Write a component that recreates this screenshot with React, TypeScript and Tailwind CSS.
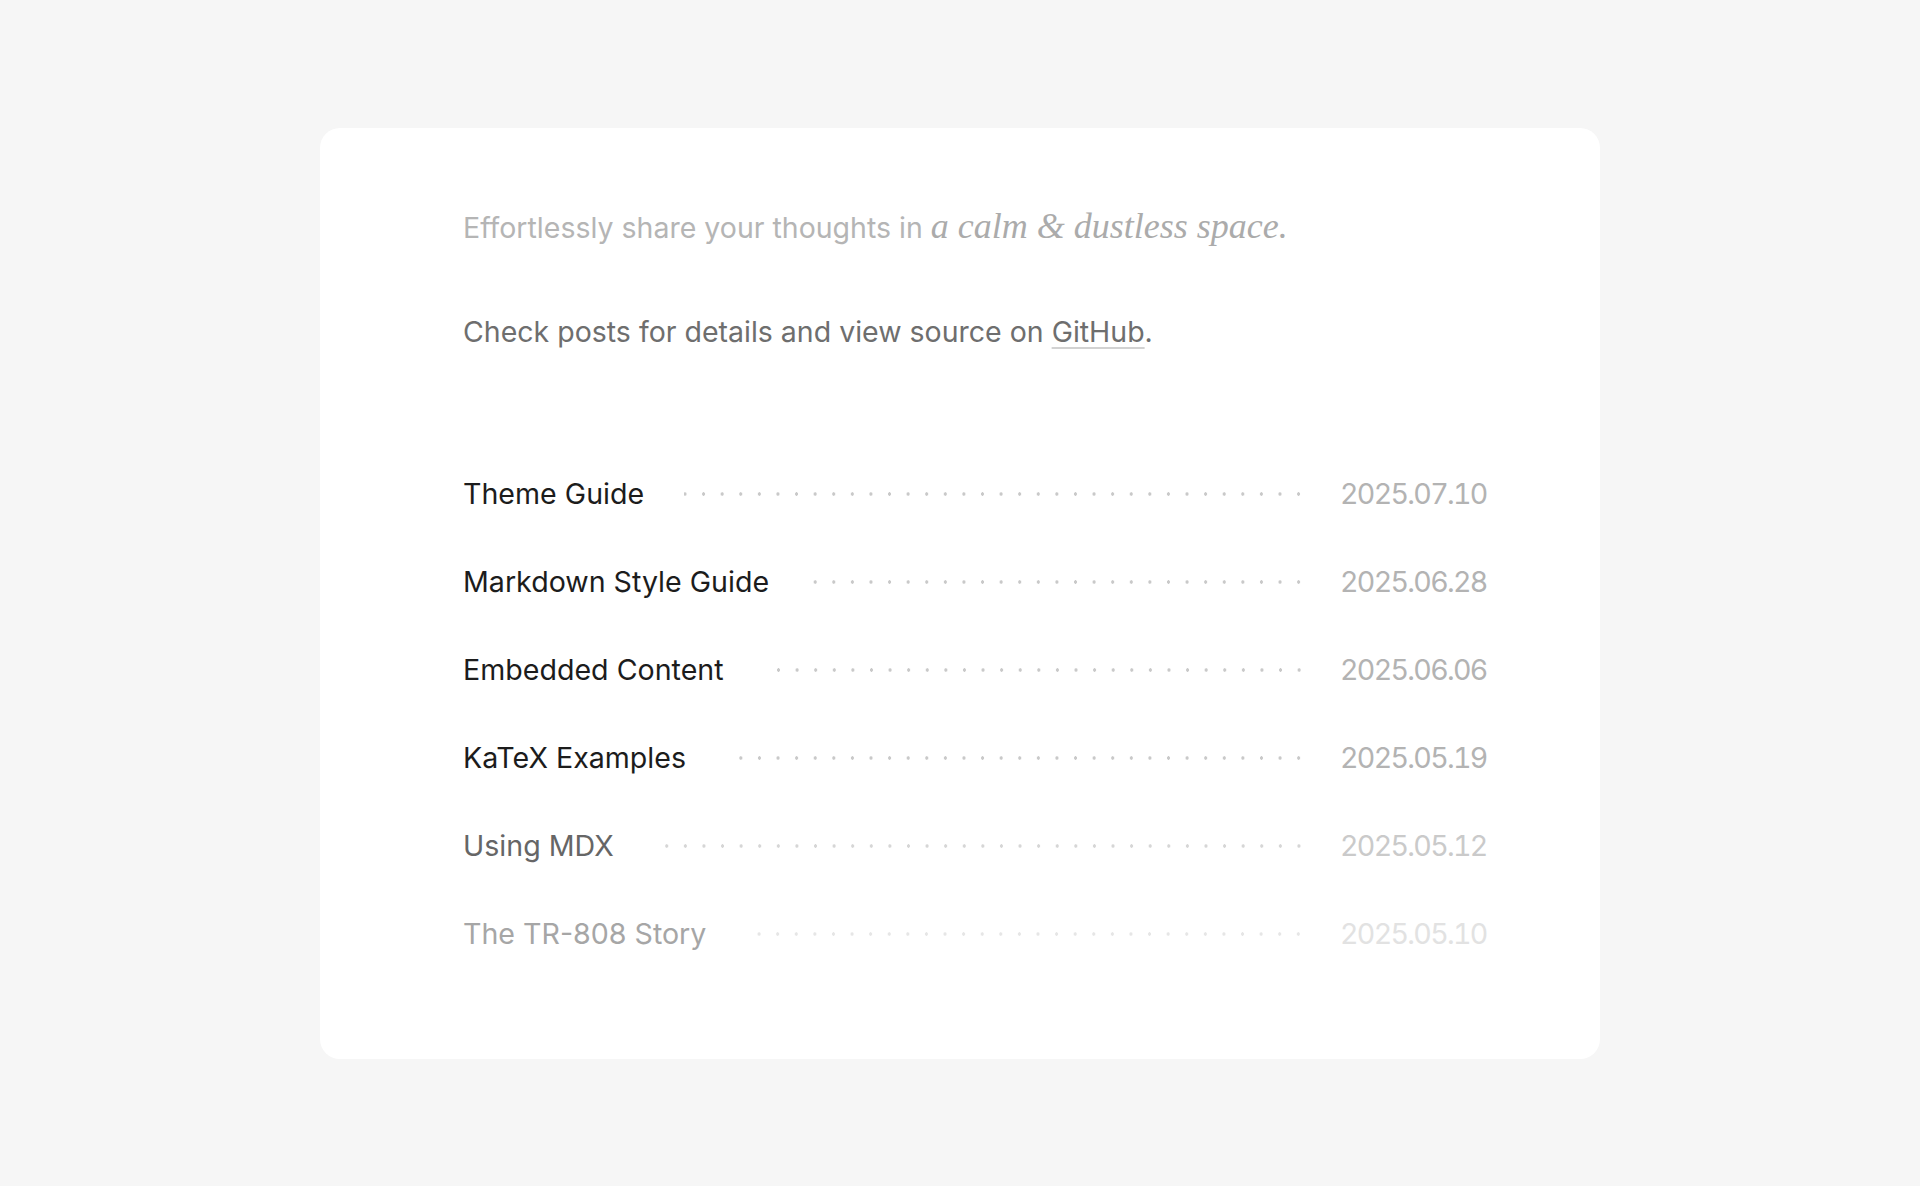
import React from "react";

const posts = [
  { title: "Theme Guide", date: "2025.07.10", t: "text-[#1c1c1c]", d: "text-[#b3b3b3]", dot: "bg-[radial-gradient(circle,#c9c9c9_1.5px,transparent_1.9px)]" },
  { title: "Markdown Style Guide", date: "2025.06.28", t: "text-[#1c1c1c]", d: "text-[#b3b3b3]", dot: "bg-[radial-gradient(circle,#c9c9c9_1.5px,transparent_1.9px)]" },
  { title: "Embedded Content", date: "2025.06.06", t: "text-[#1c1c1c]", d: "text-[#b3b3b3]", dot: "bg-[radial-gradient(circle,#c9c9c9_1.5px,transparent_1.9px)]" },
  { title: "KaTeX Examples", date: "2025.05.19", t: "text-[#1c1c1c]", d: "text-[#b3b3b3]", dot: "bg-[radial-gradient(circle,#c9c9c9_1.5px,transparent_1.9px)]" },
  { title: "Using MDX", date: "2025.05.12", t: "text-[#666666]", d: "text-[#cacaca]", dot: "bg-[radial-gradient(circle,#d6d6d6_1.5px,transparent_1.9px)]" },
  { title: "The TR-808 Story", date: "2025.05.10", t: "text-[#a6a6a6]", d: "text-[#e2e2e2]", dot: "bg-[radial-gradient(circle,#e6e6e6_1.5px,transparent_1.9px)]" },
];

export default function App() {
  return (
    <div className="min-h-[1186px] w-full bg-[#f6f6f6] pt-[128px] font-['Inter','Liberation_Sans',sans-serif]">
      <div className="mx-auto flex w-[1280px] flex-col rounded-[20px] bg-white pb-[81px] pl-[143px] pr-[113px] pt-[76px]">
        <p className="h-[45px] text-[28.5px] leading-[45px] text-[#b5b5b5]">
          Effortlessly share your thoughts in{" "}
          <span className="font-['Liberation_Serif',serif] text-[36px] italic text-[#ababab]">
            a calm &amp; dustless space.
          </span>
        </p>
        <p className="mt-[60px] h-[45px] text-[28.5px] leading-[45px] text-[#6e6e6e]">
          Check posts for details and view source on{" "}
          <a className="underline decoration-[#d2d2d2] decoration-2 underline-offset-[5px]">GitHub</a>.
        </p>
        <ul className="mt-[96px] flex flex-col">
          {posts.map((p) => (
            <li key={p.title} className="flex h-[88px] items-center text-[28.6px]">
              <span className={`${p.t} shrink-0`}>{p.title}</span>
              <span
                className={`ml-[40px] mr-[32px] h-[6px] flex-1 bg-[length:18.6px_6px] bg-[position:right_center] bg-repeat-x ${p.dot}`}
              />
              <span className={`${p.d} w-[147px] shrink-0 whitespace-nowrap pr-[2px] text-right tabular-nums tracking-[-1.7px]`}>{p.date}</span>
            </li>
          ))}
        </ul>
      </div>
    </div>
  );
}
